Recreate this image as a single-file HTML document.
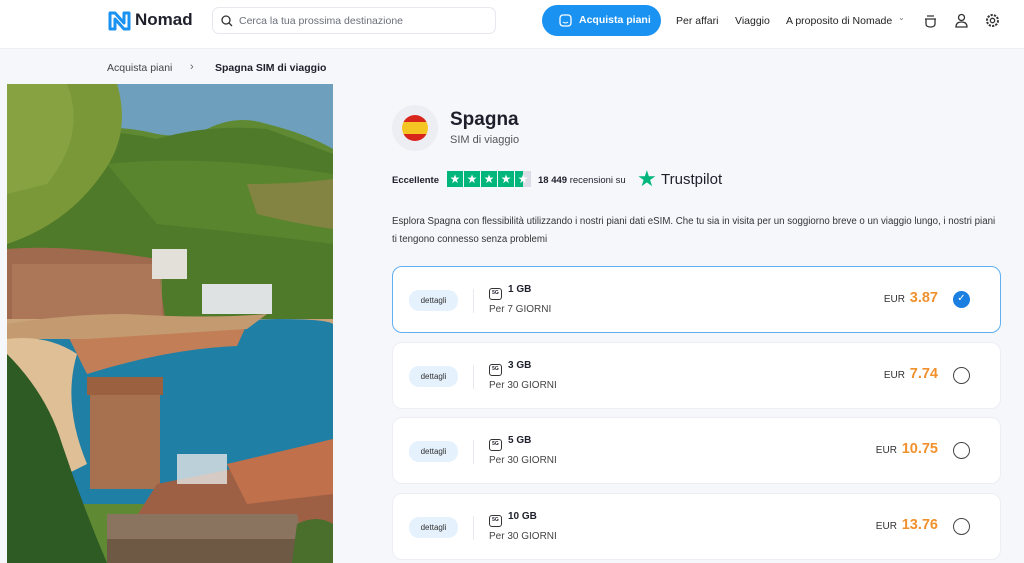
<!DOCTYPE html>
<html><head><meta charset="utf-8"><style>
*{margin:0;padding:0;box-sizing:border-box}
body{width:1024px;height:563px;overflow:hidden;background:#f6f7fb;font-family:"Liberation Sans",sans-serif;color:#1d1f2a;position:relative}
.hdr{position:absolute;left:0;top:0;width:1024px;height:49px;background:#fff;border-bottom:1px solid #eceef3}
.abs{position:absolute;white-space:nowrap}
.search{left:212px;top:7px;width:284px;height:27px;border:1px solid #e6e8ee;border-radius:7px;background:#fff}
.search span{position:absolute;left:26px;top:7px;font-size:10.5px;color:#6b6f7a}
.btn{left:542px;top:5px;width:119px;height:31px;background:#1a92f2;border-radius:16px;color:#fff;font-weight:bold;font-size:10.5px}
.nav{font-size:10.5px;color:#222;top:15px}
.card{position:absolute;left:392px;width:609px;height:67px;background:#fff;border:1px solid #eceef3;border-radius:10px}
.card.sel{border:1px solid #5fb0f2}
.det{position:absolute;left:16px;top:23px;width:49px;height:21px;background:#e5f1fd;border-radius:10px;font-size:8px;text-align:center;line-height:21px;color:#333}
.sep{position:absolute;left:80px;top:22px;width:1px;height:24px;background:#e8e9ee}
.gb{position:absolute;left:96px;top:17px;font-size:10px;font-weight:bold}
.gb i{display:inline-block;width:13px;height:12px;border:1.3px solid #333;border-radius:3px;font-style:normal;font-size:5px;text-align:center;line-height:9px;vertical-align:-2px;margin-right:6px}
.per{position:absolute;left:96px;top:37px;font-size:10px;color:#444}
.price{position:absolute;right:62px;top:23px;font-size:10px;color:#333}
.price b{font-size:14.5px;color:#f0912e;font-weight:bold;margin-left:2px}
.rad{position:absolute;right:30px;top:24px;width:17px;height:17px;border:1.3px solid #444;border-radius:50%}
</style></head><body>
<div class="hdr">
<svg class="abs" style="left:107px;top:10px" width="25" height="22" viewBox="0 0 25 22"><path d="M3 3 L3 19 L8 19 L8 9 L17 19 L22 19 L22 3 L17 3 L17 13 L8 3 Z" fill="none" stroke="#1a92f2" stroke-width="3" stroke-linejoin="round"/></svg>
<div class="abs" style="left:135px;top:10px;font-size:17px;font-weight:bold;color:#1d1f2a">Nomad</div>
<div class="abs search"><svg class="abs" style="left:8px;top:7px" width="12" height="12" viewBox="0 0 12 12"><circle cx="5" cy="5" r="4" fill="none" stroke="#333" stroke-width="1.3"/><path d="M8 8 L11 11" stroke="#333" stroke-width="1.3"/></svg><span>Cerca la tua prossima destinazione</span></div>
<div class="abs btn"><svg class="abs" style="left:17px;top:9px" width="13" height="13" viewBox="0 0 13 13"><rect x="1" y="1" width="11" height="11" rx="3" fill="none" stroke="#fff" stroke-width="1.3"/><path d="M4 8 Q6.5 10 9 8" stroke="#fff" fill="none"/></svg><span class="abs" style="left:37px;top:9px">Acquista piani</span></div>
<div class="abs nav" style="left:676px">Per affari</div>
<div class="abs nav" style="left:735px">Viaggio</div>
<div class="abs nav" style="left:786px">A proposito di Nomade</div>
<div class="abs" style="left:898px;top:13px;font-size:8px;color:#777">⌄</div>
<svg class="abs" style="left:923px;top:13px" width="15" height="15" viewBox="0 0 15 15"><path d="M3 6 H12 V11 Q12 14 7.5 14 Q3 14 3 11Z M2 6 H13 M4 3 H11" fill="none" stroke="#333" stroke-width="1.3"/></svg>
<svg class="abs" style="left:954px;top:13px" width="15" height="15" viewBox="0 0 15 15"><circle cx="7.5" cy="4.5" r="3" fill="none" stroke="#333" stroke-width="1.3"/><path d="M2 14 Q2 9 7.5 9 Q13 9 13 14Z" fill="none" stroke="#333" stroke-width="1.3"/></svg>
<svg class="abs" style="left:985px;top:13px" width="15" height="15" viewBox="0 0 15 15"><circle cx="7.5" cy="7.5" r="2.2" fill="none" stroke="#333" stroke-width="1.3"/><circle cx="7.5" cy="7.5" r="5.5" fill="none" stroke="#333" stroke-width="2" stroke-dasharray="2.2 1.2"/></svg>
</div>
<div class="abs" style="left:107px;top:62px;font-size:10.5px;color:#444">Acquista piani</div>
<div class="abs" style="left:190px;top:61px;font-size:11px;color:#666">›</div>
<div class="abs" style="left:215px;top:62px;font-size:10.5px;font-weight:bold">Spagna SIM di viaggio</div>
<svg class="abs" style="left:7px;top:84px" width="326" height="479" viewBox="0 0 326 479">
<rect width="326" height="479" fill="#5f8a33"/>
<path d="M60 0 H326 V65 Q300 50 260 40 Q230 30 200 45 Q180 55 150 50 Q110 40 70 45Z" fill="#6e9fbc"/>
<path d="M0 50 Q80 40 150 55 Q200 40 260 45 Q300 60 326 70 V240 H0Z" fill="#4f7a2a"/>
<path d="M100 80 Q200 70 326 90 V160 Q250 150 150 140Z" fill="#5e8a30" opacity=".7"/>
<path d="M240 100 Q290 100 326 95 V145 Q290 140 250 130Z" fill="#a0834e" opacity=".6"/>
<path d="M0 0 H110 Q125 50 95 90 Q60 140 0 160Z" fill="#7a9838"/>
<path d="M0 0 H60 Q80 50 40 100 L0 110Z" fill="#8aa544" opacity=".8"/>
<path d="M0 165 Q60 160 150 175 L160 250 H0Z" fill="#a06a4e"/>
<rect x="5" y="180" width="150" height="65" fill="#b48060" opacity=".6"/>
<rect x="145" y="165" width="35" height="30" fill="#e3e0da"/>
<rect x="195" y="200" width="70" height="30" fill="#dfe2e2"/>
<path d="M0 235 H326 V250 H0Z" fill="#c9a47a"/>
<path d="M0 250 Q120 240 270 235 Q320 235 326 240 V420 H0Z" fill="#1f7fa5"/>
<path d="M60 250 Q150 250 240 240 L230 262 Q160 265 80 290Z" fill="#c27e56"/>
<path d="M0 240 Q60 230 120 230 Q200 235 260 230 L240 245 Q160 250 80 255 Q30 255 0 255Z" fill="#c49a70"/>
<path d="M0 255 Q40 250 70 270 Q55 320 80 380 L0 420Z" fill="#dfbf96"/>
<path d="M0 270 Q40 310 55 360 Q75 420 100 479 H0Z" fill="#2e5a24"/>
<rect x="83" y="295" width="70" height="110" fill="#a7704e"/>
<rect x="80" y="293" width="76" height="18" fill="#9a6040"/>
<path d="M150 400 L326 365 V479 H100Z" fill="#9e6044"/>
<path d="M220 380 L326 355 V410 L240 420Z" fill="#c0704a"/>
<rect x="170" y="370" width="50" height="30" fill="#e3e5e6" opacity=".8"/>
<path d="M100 430 H290 V479 H100Z" fill="#6e5a44"/>
<path d="M100 430 H290 L295 455 H100Z" fill="#8a7460"/>
<path d="M290 440 Q310 430 326 440 V479 H285Z" fill="#4a6e2c"/>
</svg>
<div class="abs" style="left:392px;top:105px;width:46px;height:46px;border-radius:50%;background:#eceef4"></div>
<div class="abs" style="left:402px;top:115px;width:26px;height:26px;border-radius:50%;background:linear-gradient(#d8261c 0 27%,#f5c623 27% 73%,#d8261c 73%)"></div>
<div class="abs" style="left:450px;top:109px;font-size:19px;font-weight:bold">Spagna</div>
<div class="abs" style="left:450px;top:134px;font-size:11px;color:#555">SIM di viaggio</div>
<div class="abs" style="left:392px;top:175px;font-size:9.5px;font-weight:bold">Eccellente</div>
<div class="abs" style="left:447px;top:171px;display:flex;gap:1px">
<span style="width:16px;height:16px;background:#00b67a;color:#fff;font-size:12px;text-align:center;line-height:16px">★</span><span style="width:16px;height:16px;background:#00b67a;color:#fff;font-size:12px;text-align:center;line-height:16px">★</span><span style="width:16px;height:16px;background:#00b67a;color:#fff;font-size:12px;text-align:center;line-height:16px">★</span><span style="width:16px;height:16px;background:#00b67a;color:#fff;font-size:12px;text-align:center;line-height:16px">★</span><span style="width:16px;height:16px;background:linear-gradient(90deg,#00b67a 50%,#dcdce6 50%);color:#fff;font-size:12px;text-align:center;line-height:16px">★</span></div>
<div class="abs" style="left:538px;top:175px;font-size:9.5px"><b>18 449</b> recensioni su</div>
<div class="abs" style="left:637px;top:166px;font-size:22px;color:#00b67a">★</div>
<div class="abs" style="left:661px;top:171px;font-size:15px;color:#1d1f2a">Trustpilot</div>
<div class="abs" style="left:392px;top:213px;width:610px;white-space:normal;font-size:9.7px;line-height:18px;color:#333">Esplora Spagna con flessibilità utilizzando i nostri piani dati eSIM. Che tu sia in visita per un soggiorno breve o un viaggio lungo, i nostri piani ti tengono connesso senza problemi</div>
<div class="card sel" style="top:266px"><div class="det">dettagli</div><div class="sep"></div><div class="gb"><i>5G</i>1 GB</div><div class="per">Per 7 GIORNI</div><div class="price">EUR <b>3.87</b></div><div class="rad" style="background:#1a7fe0;border-color:#1a7fe0;color:#fff;font-size:10px;text-align:center;line-height:14px">✓</div></div>
<div class="card" style="top:342px"><div class="det">dettagli</div><div class="sep"></div><div class="gb"><i>5G</i>3 GB</div><div class="per">Per 30 GIORNI</div><div class="price">EUR <b>7.74</b></div><div class="rad"></div></div>
<div class="card" style="top:417px"><div class="det">dettagli</div><div class="sep"></div><div class="gb"><i>5G</i>5 GB</div><div class="per">Per 30 GIORNI</div><div class="price">EUR <b>10.75</b></div><div class="rad"></div></div>
<div class="card" style="top:493px"><div class="det">dettagli</div><div class="sep"></div><div class="gb"><i>5G</i>10 GB</div><div class="per">Per 30 GIORNI</div><div class="price">EUR <b>13.76</b></div><div class="rad"></div></div>
</body></html>
